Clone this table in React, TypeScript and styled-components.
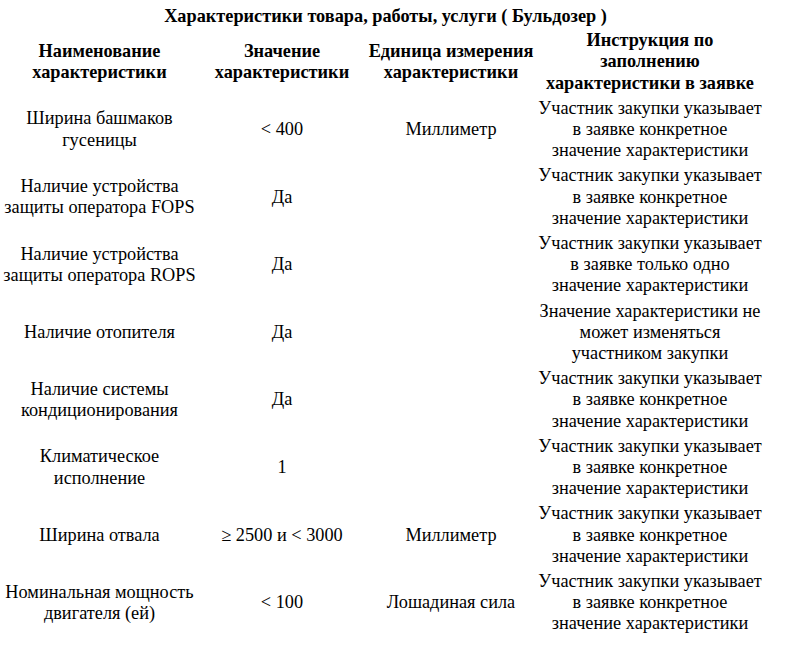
import React from "react";
import styled, { createGlobalStyle } from "styled-components";

const Global = createGlobalStyle`
  html, body { margin: 0; padding: 0; background: #fff; }
  body { font-family: "Liberation Serif", "Times New Roman", serif; font-size: 18px; color: #000; }
`;

const Table = styled.table`
  width: 765px;
  border-collapse: separate;
  border-spacing: 2px;
  table-layout: fixed;
  font-family: "Liberation Serif", "Times New Roman", serif;
  font-size: 18.3px;
  line-height: 21.2px;
  color: #000;
`;

const Caption = styled.caption`
  font-weight: bold;
  padding: 6px 0 0 6px;
`;

const Th = styled.th`
  font-weight: bold;
  text-align: center;
  vertical-align: middle;
  padding: 1px;
`;

const Td = styled.td`
  text-align: center;
  vertical-align: middle;
  padding: 1px;
`;

type Row = [string, string, string, string];

const rows: Row[] = [
  ["Ширина башмаков гусеницы", "< 400", "Миллиметр", "Участник закупки указывает в заявке конкретное значение характеристики"],
  ["Наличие устройства защиты оператора FOPS", "Да", "", "Участник закупки указывает в заявке конкретное значение характеристики"],
  ["Наличие устройства защиты оператора ROPS", "Да", "", "Участник закупки указывает в заявке только одно значение характеристики"],
  ["Наличие отопителя", "Да", "", "Значение характеристики не может изменяться участником закупки"],
  ["Наличие системы кондиционирования", "Да", "", "Участник закупки указывает в заявке конкретное значение характеристики"],
  ["Климатическое исполнение", "1", "", "Участник закупки указывает в заявке конкретное значение характеристики"],
  ["Ширина отвала", "≥ 2500 и < 3000", "Миллиметр", "Участник закупки указывает в заявке конкретное значение характеристики"],
  ["Номинальная мощность двигателя (ей)", "< 100", "Лошадиная сила", "Участник закупки указывает в заявке конкретное значение характеристики"],
];

export default function App() {
  return (
    <>
      <Global />
      <Table>
        <Caption>Характеристики товара, работы, услуги ( Бульдозер )</Caption>
        <colgroup>
          <col style={{ width: 195 }} />
          <col style={{ width: 166 }} />
          <col style={{ width: 168 }} />
          <col style={{ width: 226 }} />
        </colgroup>
        <thead>
          <tr>
            <Th>Наименование характеристики</Th>
            <Th>Значение характеристики</Th>
            <Th>Единица измерения характеристики</Th>
            <Th>Инструкция по заполнению характеристики в заявке</Th>
          </tr>
        </thead>
        <tbody>
          {rows.map((r, i) => (
            <tr key={i}>
              <Td>{r[0]}</Td>
              <Td>{r[1]}</Td>
              <Td>{r[2]}</Td>
              <Td>{r[3]}</Td>
            </tr>
          ))}
        </tbody>
      </Table>
    </>
  );
}
